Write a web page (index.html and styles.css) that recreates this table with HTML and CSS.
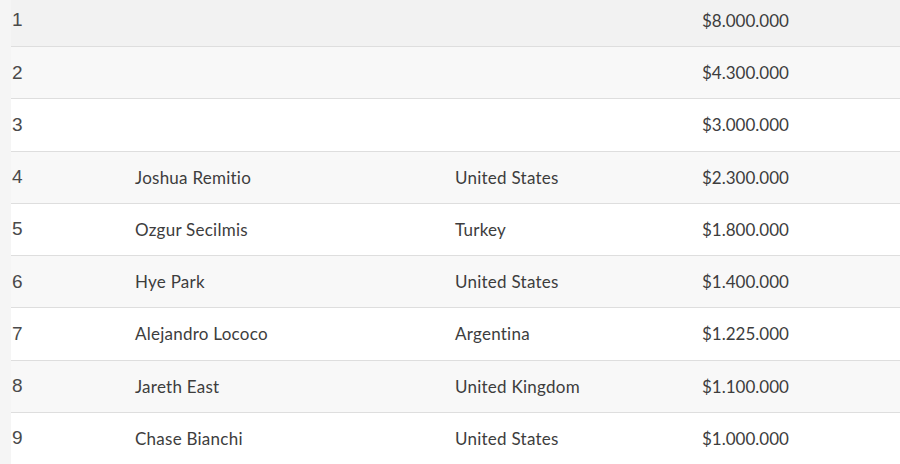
FILE: index.html
```html
<!DOCTYPE html>
<html>
<head>
<meta charset="utf-8">
<link rel="stylesheet" href="styles.css">
</head>
<body>
<div class="table">
  <div class="row hover"><div class="rank">1</div><div class="cell"></div><div class="cell"></div><div class="cell prize">$8.000.000</div></div>
  <div class="row even"><div class="rank">2</div><div class="cell"></div><div class="cell"></div><div class="cell prize">$4.300.000</div></div>
  <div class="row"><div class="rank">3</div><div class="cell"></div><div class="cell"></div><div class="cell prize">$3.000.000</div></div>
  <div class="row even"><div class="rank">4</div><div class="cell">Joshua Remitio</div><div class="cell">United States</div><div class="cell prize">$2.300.000</div></div>
  <div class="row"><div class="rank">5</div><div class="cell">Ozgur Secilmis</div><div class="cell">Turkey</div><div class="cell prize">$1.800.000</div></div>
  <div class="row even"><div class="rank">6</div><div class="cell">Hye Park</div><div class="cell">United States</div><div class="cell prize">$1.400.000</div></div>
  <div class="row"><div class="rank">7</div><div class="cell">Alejandro Lococo</div><div class="cell">Argentina</div><div class="cell prize">$1.225.000</div></div>
  <div class="row even"><div class="rank">8</div><div class="cell">Jareth East</div><div class="cell">United Kingdom</div><div class="cell prize">$1.100.000</div></div>
  <div class="row"><div class="rank">9</div><div class="cell">Chase Bianchi</div><div class="cell">United States</div><div class="cell prize">$1.000.000</div></div>
</div>
</body>
</html>
```
FILE: styles.css
```css
html, body {
  margin: 0;
  padding: 0;
  background: #f5f5f5;
  overflow: hidden;
}
body {
  padding-left: 11px;
  font-family: Lato, "Liberation Sans", sans-serif;
  font-size: 17px;
  color: #3d3d3d;
}
.table {
  margin-top: -5.25px;
  background: #fff;
}
.row {
  display: grid;
  grid-template-columns: 124px 320px 247px 1fr;
  align-items: center;
  height: 51.25px;
  border-bottom: 1px solid #dedede;
  background: #fff;
}
.row.even {
  background: #f8f8f8;
}
.row.hover {
  background: #f2f2f2;
}
.rank {
  padding-left: 1px;
  font-family: "Liberation Sans", Arial, sans-serif;
  font-size: 19px;
  color: #4a4a4a;
}
.cell {
  letter-spacing: 0.25px;
}
.cell.prize {
  letter-spacing: 0;
}
```
